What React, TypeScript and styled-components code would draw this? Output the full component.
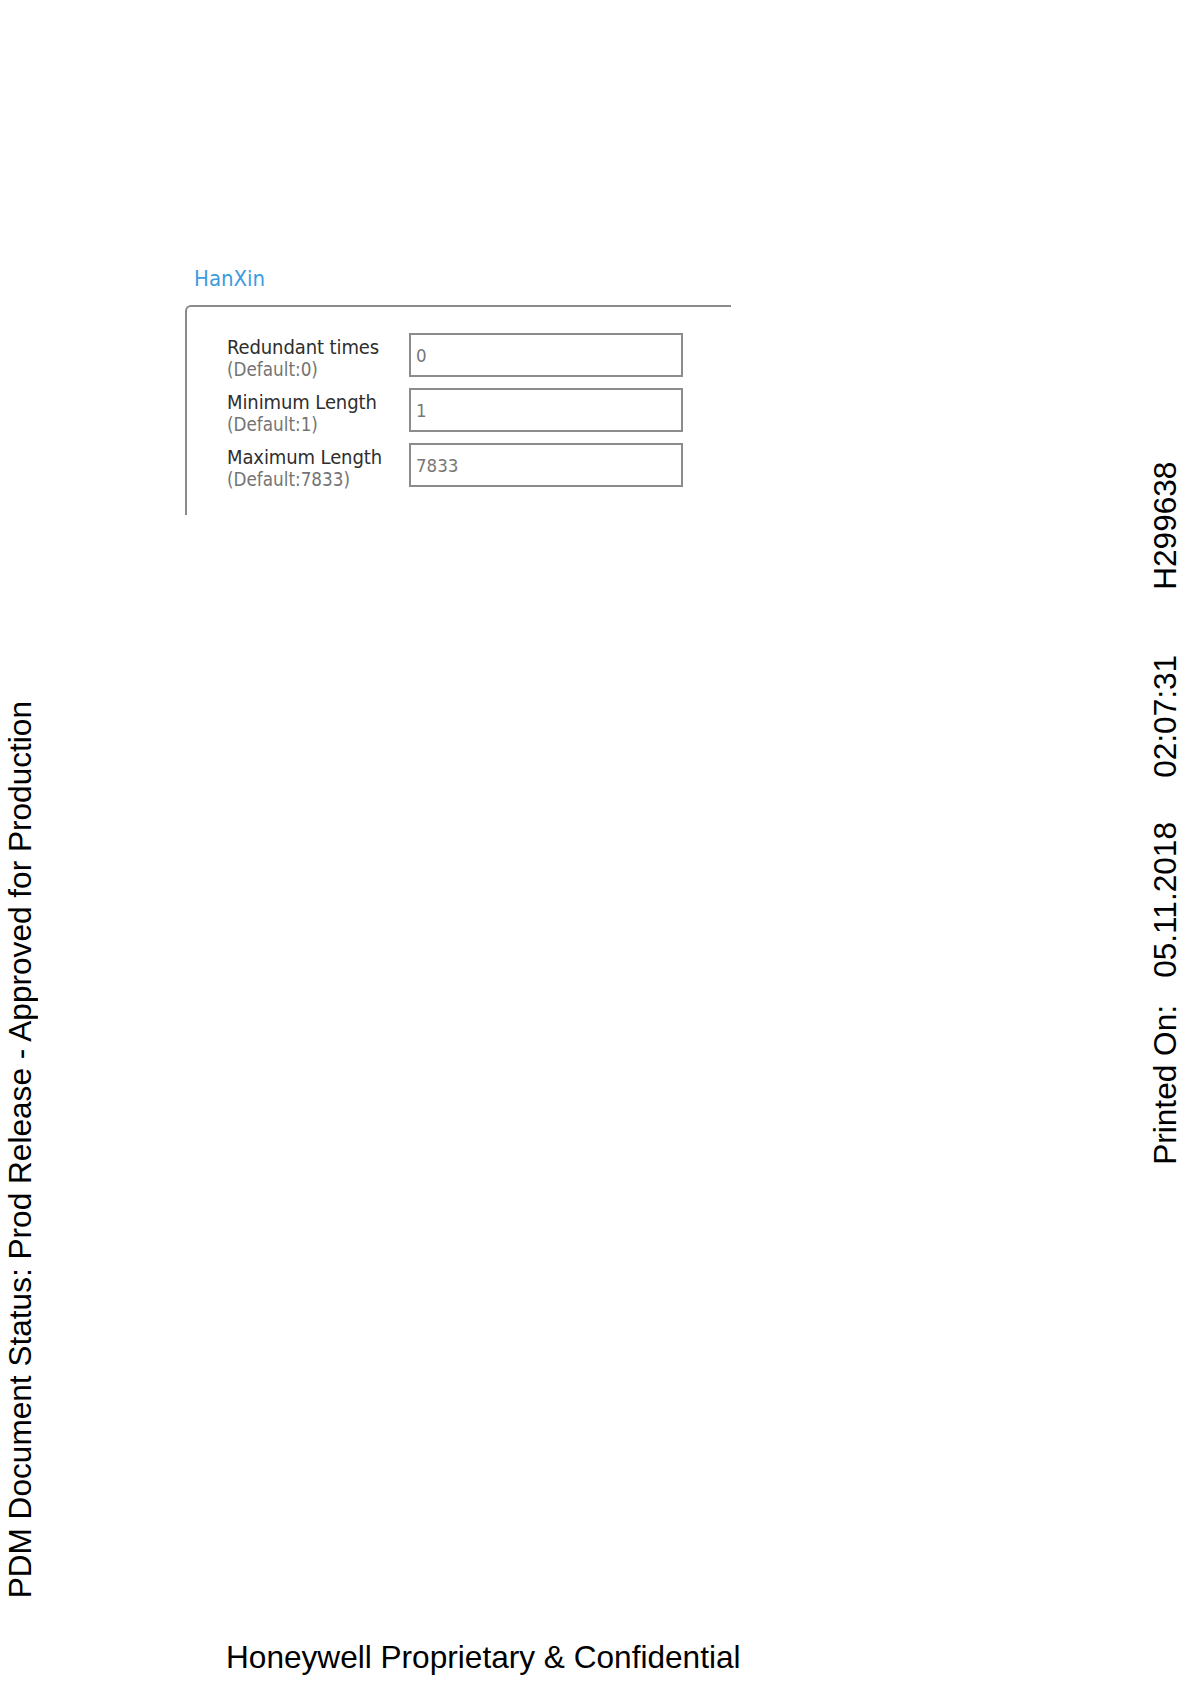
import React, { FC } from 'react';
import styled, { createGlobalStyle } from 'styled-components';

const GlobalStyle = createGlobalStyle`
  html, body {
    margin: 0;
    padding: 0;
    background: #fff;
  }
  * {
    box-sizing: border-box;
  }
`;

const Page = styled.div`
  width: 1190px;
  height: 1684px;
  display: flex;
  background: #fff;
  font-family: "Liberation Sans", Arial, sans-serif;
  color: #000;
  overflow: hidden;
`;

const Strip = styled.aside<{ $width: number; $bottom: number; $left: number }>`
  width: ${(p) => p.$width}px;
  flex-shrink: 0;
  display: flex;
  flex-direction: column;
  justify-content: flex-end;
  align-items: flex-start;
  padding-bottom: ${(p) => p.$bottom}px;
  padding-left: ${(p) => p.$left}px;
`;

const SideText = styled.div`
  writing-mode: vertical-rl;
  transform: rotate(180deg);
  font-size: 31.6px;
  line-height: 32px;
  white-space: nowrap;
`;

const Chunk = styled.span<{ $gap?: number }>`
  margin-inline-start: ${(p) => p.$gap || 0}px;
`;

const Main = styled.main`
  flex: 1;
  display: flex;
  flex-direction: column;
  padding-top: 266px;
  padding-left: 137px;
`;

const Title = styled.div`
  padding-left: 9px;
  font-family: "DejaVu Sans", Tahoma, sans-serif;
  font-stretch: condensed;
  font-size: 22px;
  line-height: 25px;
  color: #3d9be0;
`;

const Frame = styled.section`
  margin-top: 14px;
  width: 546px;
  height: 210px;
  border-top: 2px solid #8a8a8a;
  border-left: 2px solid #8a8a8a;
  border-top-left-radius: 6px;
  padding: 26px 0 0 40px;
  display: flex;
  flex-direction: column;
  gap: 11px;
`;

const Row = styled.div`
  display: flex;
  height: 44px;
`;

const Label = styled.div`
  width: 182px;
  padding-top: 3px;
  font-family: "DejaVu Sans", Tahoma, sans-serif;
  font-stretch: condensed;
  white-space: nowrap;
`;

const Name = styled.div`
  font-size: 20px;
  line-height: 22px;
  letter-spacing: -0.1px;
  color: #2e2e2e;
`;

const Hint = styled.div`
  font-size: 18.7px;
  line-height: 23px;
  color: #747474;
`;

const Field = styled.input`
  width: 274px;
  height: 44px;
  border: 2px solid #8c8c8c;
  background: #fff;
  padding: 0 0 0 5px;
  font-family: "DejaVu Sans", Tahoma, sans-serif;
  font-stretch: condensed;
  font-size: 18.5px;
  color: #777;
  outline: none;
`;

const Footer = styled.footer`
  margin-top: auto;
  padding-left: 41px;
  padding-bottom: 8px;
  font-size: 31.6px;
  line-height: 37px;
  white-space: nowrap;
`;

const fields = [
  { name: 'Redundant times', hint: '(Default:0)', value: '0' },
  { name: 'Minimum Length', hint: '(Default:1)', value: '1' },
  { name: 'Maximum Length', hint: '(Default:7833)', value: '7833' },
];

const App: FC = () => {
  return (
    <>
      <GlobalStyle />
      <Page>
        <Strip $width={48} $bottom={86} $left={4}>
          <SideText>PDM Document Status: Prod Release - Approved for Production</SideText>
        </Strip>
        <Main>
          <Title>HanXin</Title>
          <Frame>
            {fields.map((f) => (
              <Row key={f.name}>
                <Label>
                  <Name>{f.name}</Name>
                  <Hint>{f.hint}</Hint>
                </Label>
                <Field defaultValue={f.value} />
              </Row>
            ))}
          </Frame>
          <Footer>Honeywell Proprietary &amp; Confidential</Footer>
        </Main>
        <Strip $width={41} $bottom={519} $left={0}>
          <SideText>
            <Chunk>Printed On:</Chunk>
            <Chunk $gap={27}>05.11.2018</Chunk>
            <Chunk $gap={44}>02:07:31</Chunk>
            <Chunk $gap={65}>H299638</Chunk>
          </SideText>
        </Strip>
      </Page>
    </>
  );
};

export default App;
